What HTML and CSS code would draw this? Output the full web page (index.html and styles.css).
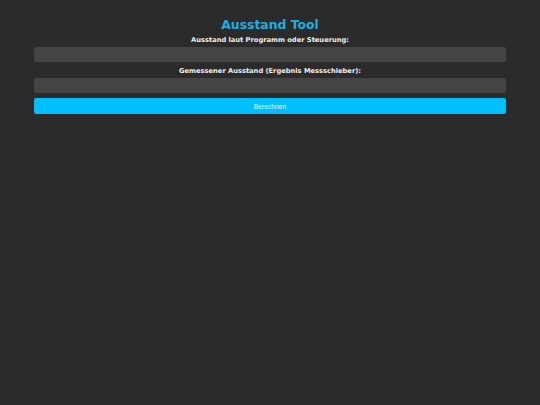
FILE: index.html
```html
<!DOCTYPE html>
<html lang="de">
<head>
<meta charset="utf-8">
<title>Ausstand Tool</title>
<link rel="stylesheet" href="styles.css">
</head>
<body>
<div class="container">
  <h1 class="title">Ausstand Tool</h1>
  <label class="label" for="soll">Ausstand laut Programm oder Steuerung:</label>
  <input class="field" id="soll" type="text">
  <label class="label" for="ist">Gemessener Ausstand (Ergebnis Messschieber):</label>
  <input class="field" id="ist" type="text">
  <button class="btn" type="button">Berechnen</button>
</div>
</body>
</html>
```
FILE: styles.css
```css
html, body {
  margin: 0;
  padding: 0;
  background: #2b2b2b;
  height: 100%;
}
body {
  font-family: "DejaVu Sans", Verdana, sans-serif;
  color: #e8e8e8;
}
.container {
  padding: 17px 34px 0 34px;
  display: flex;
  flex-direction: column;
}
.title {
  margin: 0 0 4px 0;
  text-align: center;
  font-size: 12.4px;
  font-weight: bold;
  color: #1eaee2;
  line-height: 15px;
}
.label {
  display: block;
  text-align: center;
  font-size: 6.7px;
  font-weight: bold;
  line-height: 9px;
  margin-bottom: 2px;
  color: #f0f0f0;
}
.field {
  box-sizing: border-box;
  height: 15px;
  width: 100%;
  margin: 0 0 5px 0;
  border: none;
  border-radius: 2px;
  background: #444444;
  padding: 0 4px;
}
.btn {
  box-sizing: border-box;
  height: 16px;
  width: 100%;
  border: none;
  border-radius: 2px;
  background: #00bfff;
  color: #e6f6ff;
  font-family: "Liberation Sans", Arial, sans-serif;
  font-size: 6.7px;
  padding: 0;
}
```
